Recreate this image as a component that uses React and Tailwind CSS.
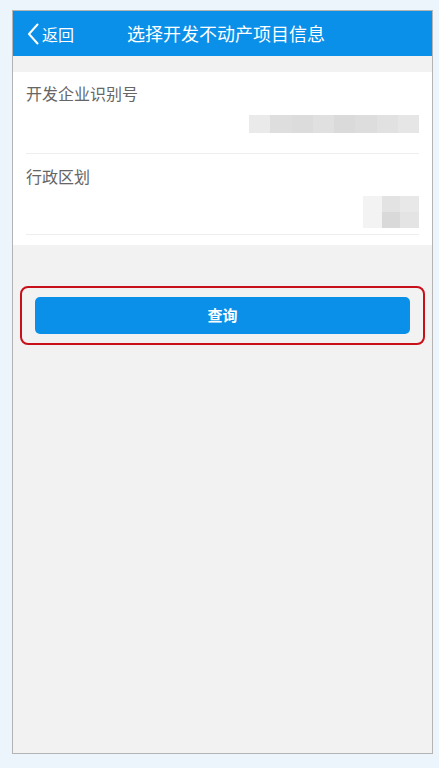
const font = { fontFamily: '"Noto Sans CJK SC", "Noto Sans", sans-serif' };

function Blur({ shades, className }) {
    return (
        <div className={`flex ${className}`}>
            {shades.map((s, i) => (
                <div key={i} className="h-full flex-1" style={{ backgroundColor: s }} />
            ))}
        </div>
    );
}

export default function App() {
    return (
        <div className="min-h-[768px] w-[439px] bg-[#edf5fc] pt-[10px]" style={font}>
            <div className="ml-[12px] flex h-[744px] w-[421px] flex-col border border-[#b4b4b4] bg-[#f2f2f2]">
                {/* Header */}
                <div className="flex h-[45px] items-center bg-[#0a90e8] text-white">
                    <div className="flex w-[114px] items-center pl-[14px]">
                        <svg width="12" height="22" viewBox="0 0 12 22" fill="none">
                            <path d="M10.5 1.5 L2 11 L10.5 20.5" stroke="white" strokeWidth="2" strokeLinecap="round" strokeLinejoin="round" />
                        </svg>
                        <span className="ml-[3px] text-[16px]">返回</span>
                    </div>
                    <span className="text-[18px]">选择开发不动产项目信息</span>
                </div>

                {/* Form card */}
                <div className="mt-[16px] bg-white px-[13px]">
                    <div className="flex h-[82px] flex-col border-b border-[#eeeeee]">
                        <span className="pt-[9px] text-[16px] leading-[24px] text-[#666666]">
                            开发企业识别号
                        </span>
                        <div className="mt-[10px] flex justify-end">
                            <Blur
                                className="h-[18px] w-[170px]"
                                shades={['#eaeaea', '#dedede', '#dcdcdc', '#e0e0e0', '#dadada', '#dddddd', '#e1e1e1', '#e6e6e6']}
                            />
                        </div>
                    </div>
                    <div className="flex h-[81px] flex-col border-b border-[#eeeeee]">
                        <span className="pt-[10px] text-[16px] leading-[24px] text-[#666666]">
                            行政区划
                        </span>
                        <div className="mt-[8px] flex justify-end">
                            <div className="grid h-[32px] w-[56px] grid-cols-3 grid-rows-2">
                                <div className="bg-[#f3f3f3]" />
                                <div className="bg-[#e3e3e3]" />
                                <div className="bg-[#e8e8e8]" />
                                <div className="bg-[#f3f3f3]" />
                                <div className="bg-[#d9d9d9]" />
                                <div className="bg-[#e4e4e4]" />
                            </div>
                        </div>
                    </div>
                    <div className="h-[10px]" />
                </div>

                {/* Query button */}
                <div className="mx-[7px] mt-[41px] rounded-[8px] border-2 border-[#c8101a] px-[13px] py-[9px]">
                    <button className="flex h-[37px] w-full items-center justify-center rounded-[5px] bg-[#0a90e8] text-[15px] font-bold text-white">
                        查询
                    </button>
                </div>
            </div>
        </div>
    );
}
